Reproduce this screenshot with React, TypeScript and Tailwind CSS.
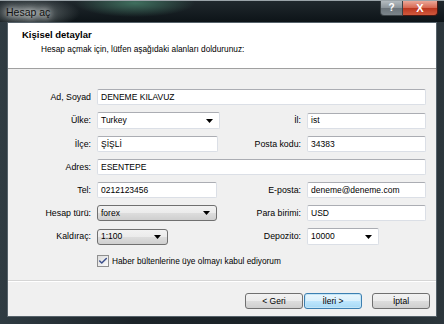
import { Check } from "lucide-react";

const font = "font-['Liberation_Sans',Arial,sans-serif]";

function Label({ children }: { children: React.ReactNode }) {
  return <div className="flex h-[16px] items-center justify-end whitespace-nowrap">{children}</div>;
}

function TextBox({ value, className = "" }: { value: string; className?: string }) {
  return (
    <div
      className={`flex h-[16px] items-center rounded-[2px] border border-[#dbdfe6] border-t-[#abadb3] bg-white px-[3px] text-[8.5px] ${className}`}
    >
      {value}
    </div>
  );
}

function Arrow() {
  return (
    <svg width="7" height="4" viewBox="0 0 7 4" className="ml-auto shrink-0">
      <path d="M0 0h7L3.5 4z" fill="#000" />
    </svg>
  );
}

// editable combo: white field with arrow
function Combo({ value, className = "" }: { value: string; className?: string }) {
  return (
    <div
      className={`flex h-[17px] items-center rounded-[2px] border border-[#dbdfe6] border-t-[#abadb3] bg-white pl-[3px] pr-[6px] text-[8.5px] ${className}`}
    >
      {value}
      <Arrow />
    </div>
  );
}

// drop-down list: button-like gradient
function DropList({ value, className = "" }: { value: string; className?: string }) {
  return (
    <div
      className={`flex h-[16px] items-center rounded-[3px] border border-[#707070] bg-[linear-gradient(#f2f2f2_0%,#ebebeb_50%,#dddddd_51%,#cfcfcf_100%)] pl-[3px] pr-[6px] text-[8.5px] ${className}`}
    >
      {value}
      <Arrow />
    </div>
  );
}

function Button({ children, focused = false }: { children: React.ReactNode; focused?: boolean }) {
  return (
    <button
      type="button"
      className={`flex h-[16px] w-[58px] items-center justify-center rounded-[3px] border text-[8.5px] text-black ${
        focused
          ? "border-[#3c7fb1] bg-[linear-gradient(#eaf6fd_0%,#d9f0fc_50%,#bee6fd_51%,#a7d9f5_100%)] shadow-[inset_0_0_0_1px_#c4e5f6]"
          : "border-[#707070] bg-[linear-gradient(#f2f2f2_0%,#ebebeb_50%,#dddddd_51%,#cfcfcf_100%)]"
      }`}
    >
      {children}
    </button>
  );
}

export default function App() {
  return (
    <div
      className={`flex h-[324px] w-[444px] flex-col overflow-hidden bg-[linear-gradient(90deg,#2f3b42,#1c2429_30%,#1a2227_70%,#2c363c)] text-[8.8px] leading-none text-black ${font}`}
    >
      {/* title bar */}
      <div className="flex h-[22px] shrink-0 border-t border-[#9aa3a8] bg-[radial-gradient(ellipse_60px_14px_at_135px_2px,#3f6f5e,transparent),radial-gradient(ellipse_50px_16px_at_30px_12px,#6d7677,transparent),linear-gradient(#20282d,#0d1418)]">
        <div className="flex items-center pl-[6px] pt-[2px] text-[10.5px] text-[#111] [text-shadow:0_0_6px_#fff,0_0_10px_#fff]">
          Hesap aç
        </div>
        <div className="ml-auto mr-[6px] flex self-start">
          <div className="flex h-[15px] w-[23px] items-center justify-center rounded-bl-[4px] border border-t-0 border-[#3b4246] bg-[linear-gradient(#b4bbc0,#8a9399_50%,#6a737a_51%,#7c858b)] text-[10px] font-bold text-white">
            ?
          </div>
          <div className="flex h-[15px] w-[35px] items-center justify-center rounded-br-[4px] border border-l-0 border-t-0 border-[#4a1a14] bg-[linear-gradient(#eba898,#d6654f_50%,#ba361f_51%,#d0593d)] text-[11px] font-bold text-white">
            X
          </div>
        </div>
      </div>

      {/* client area */}
      <div className="mx-[7px] mb-[7px] flex flex-1 flex-col border border-[#56626a] bg-[#f0f0f0]">
        <div className="h-[46px] shrink-0 border-b border-[#a0a0a0] bg-white pl-[14px] pt-[7px]">
          <div className="text-[9.5px] font-bold">Kişisel detaylar</div>
          <div className="mt-[5px] pl-[19px] text-[8.3px]">
            Hesap açmak için, lütfen aşağıdaki alanları doldurunuz:
          </div>
        </div>

        <div className="h-[211px] shrink-0 pt-[20px]">
          <div className="grid grid-cols-[83px_121px_77px_119px] items-center gap-x-[6px] gap-y-[7px]">
            <Label>Ad, Soyad</Label>
            <TextBox value="DENEME KILAVUZ" className="col-span-3" />

            <Label>Ülke:</Label>
            <Combo value="Turkey" className="w-[123px]" />
            <Label>İl:</Label>
            <TextBox value="ist" />

            <Label>İlçe:</Label>
            <TextBox value="ŞİŞLİ" />
            <Label>Posta kodu:</Label>
            <TextBox value="34383" />

            <Label>Adres:</Label>
            <TextBox value="ESENTEPE" className="col-span-3" />

            <Label>Tel:</Label>
            <TextBox value="0212123456" className="w-[120px]" />
            <Label>E-posta:</Label>
            <TextBox value="deneme@deneme.com" />

            <Label>Hesap türü:</Label>
            <DropList value="forex" className="w-[120px]" />
            <Label>Para birimi:</Label>
            <TextBox value="USD" />

            <Label>Kaldıraç:</Label>
            <DropList value="1:100" className="w-[71px]" />
            <Label>Depozito:</Label>
            <Combo value="10000" className="w-[72px]" />

            <div />
            <label className="col-span-3 mt-[3px] flex items-center gap-[3px] text-[8.3px]">
              <span className="flex h-[12px] w-[12px] items-center justify-center border border-[#8f8f8f] bg-[linear-gradient(135deg,#dcdcdc,#fbfbfb)]">
                <Check size={10} strokeWidth={3.5} className="text-[#3b4f8c]" />
              </span>
              Haber bültenlerine üye olmayı kabul ediyorum
            </label>
          </div>
        </div>

        <div className="flex flex-1 justify-end border-t border-[#d5d5d5] pr-[6px] pt-[12px] shadow-[inset_0_1px_0_#fff]">
          <div className="flex gap-[1px]">
            <Button>&lt; Geri</Button>
            <Button focused>İleri &gt;</Button>
          </div>
          <div className="ml-[10px]">
            <Button>İptal</Button>
          </div>
        </div>
      </div>
    </div>
  );
}
